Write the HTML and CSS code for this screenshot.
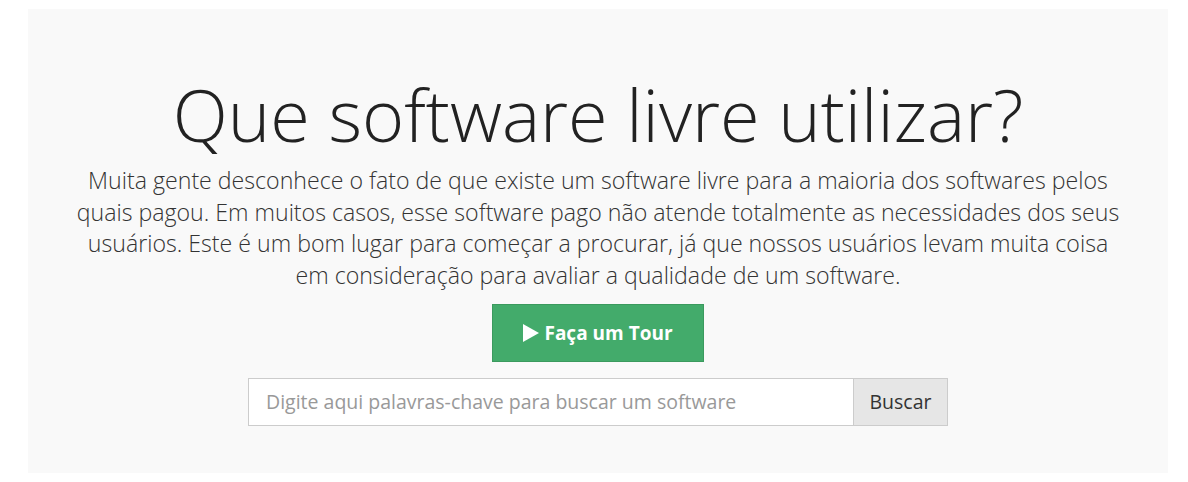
FILE: index.html
```html
<!DOCTYPE html>
<html lang="pt-BR">
<head>
<meta charset="utf-8">
<title>Que software livre utilizar?</title>
<link rel="stylesheet" href="styles.css">
</head>
<body>
<div class="jumbotron">
  <h1 class="title">Que software livre utilizar?</h1>
  <p class="lead">Muita gente desconhece o fato de que existe um software livre para a maioria dos softwares pelos quais pagou. Em muitos casos, esse software pago não atende totalmente as necessidades dos seus usuários. Este é um bom lugar para começar a procurar, já que nossos usuários levam muita coisa em consideração para avaliar a qualidade de um software.</p>
  <a class="btn-tour" href="#"><svg class="play" width="16" height="18" viewBox="0 0 16 18"><path d="M0 0 L16 9 L0 18 Z" fill="#fff"/></svg>Faça um Tour</a>
  <form class="search">
    <input class="search-input" type="text" placeholder="Digite aqui palavras-chave para buscar um software">
    <button class="search-btn" type="button">Buscar</button>
  </form>
</div>
</body>
</html>
```
FILE: styles.css
```css
html, body {
  margin: 0;
  padding: 0;
  background: #fff;
}
body {
  font-family: "Open Sans", "Liberation Sans", sans-serif;
  color: #333;
}
.jumbotron {
  margin: 9px 20px 0 28px;
  width: 1140px;
  height: 464px;
  box-sizing: border-box;
  background: #f9f9f9;
  padding: 58px 44px 0;
  display: flex;
  flex-direction: column;
  align-items: center;
  text-align: center;
}
.title {
  margin: 0;
  font-weight: 300;
  font-size: 72px;
  line-height: 94px;
  color: #222;
}
.lead {
  margin: 4px 0 12px;
  font-weight: 300;
  font-size: 23.15px;
  line-height: 31.7px;
  color: #333;
}
.btn-tour {
  display: flex;
  align-items: center;
  justify-content: center;
  gap: 5px;
  width: 212px;
  height: 58px;
  box-sizing: border-box;
  background: #43ab6b;
  border: 1px solid #3b9a5e;
  color: #fff;
  font-weight: 700;
  font-size: 19px;
  text-decoration: none;
}
.play {
  display: block;
}
.search {
  margin-top: 16px;
  display: flex;
  width: 700px;
  height: 48px;
}
.search-input {
  flex: 1;
  box-sizing: border-box;
  height: 48px;
  margin: 0;
  border: 1px solid #ccc;
  border-right: 0;
  padding: 0 17px;
  font-family: "Open Sans", "Liberation Sans", sans-serif;
  font-size: 19.5px;
  color: #555;
  background: #fff;
  outline: none;
}
.search-input::placeholder {
  color: #999;
}
.search-btn {
  width: 95px;
  height: 48px;
  box-sizing: border-box;
  margin: 0;
  border: 1px solid #ccc;
  background: #e6e6e6;
  font-family: "Open Sans", "Liberation Sans", sans-serif;
  font-size: 19.5px;
  color: #333;
  padding: 0;
}
```
